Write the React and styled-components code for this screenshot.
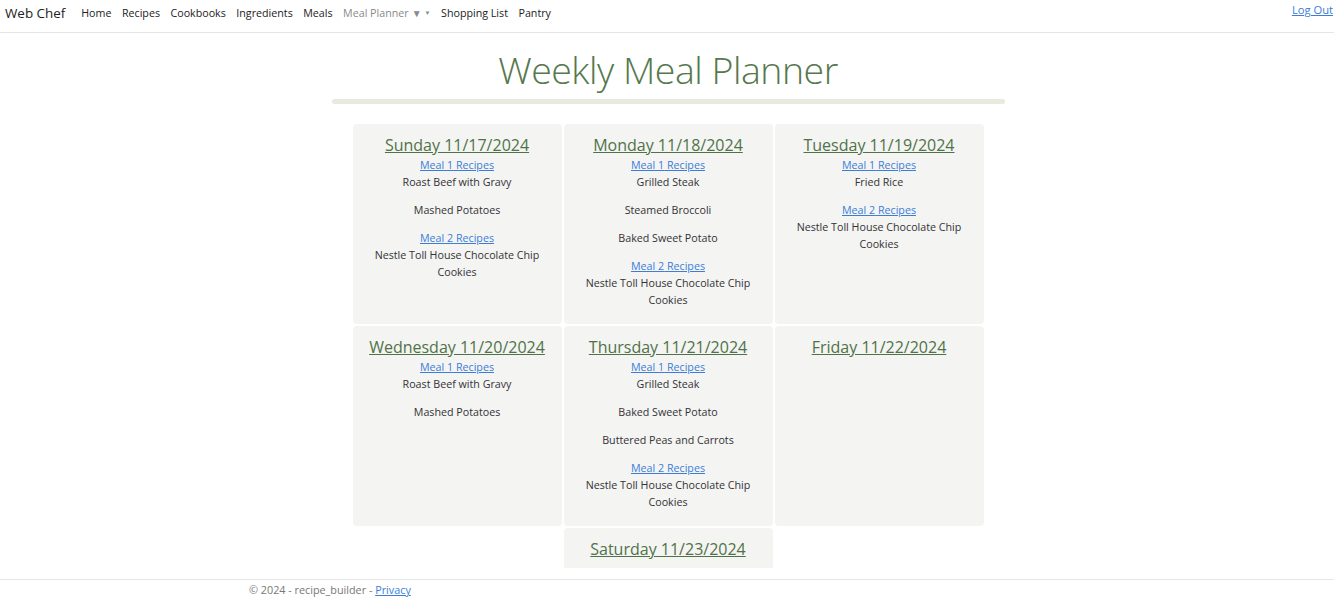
import React from "react"
import styled, { createGlobalStyle } from "styled-components"

const GlobalStyle = createGlobalStyle`
  html, body {
    margin: 0;
    padding: 0;
    background: #fff;
    font-family: "Open Sans", "Noto Sans", sans-serif;
    color: #222;
  }
  * { box-sizing: border-box; }
`

const Page = styled.div`
  display: flex;
  flex-direction: column;
  height: 100vh;
`

const Navbar = styled.nav`
  display: flex;
  align-items: flex-start;
  flex-shrink: 0;
  height: 33px;
  border-bottom: 1px solid #e6e6e6;
  padding: 0 1px 0 5px;
`

const Brand = styled.a`
  font-size: 13.4px;
  color: #222;
  line-height: 26px;
  margin-right: 16px;
  text-decoration: none;
`

const NavList = styled.div`
  display: flex;
  gap: 10.5px;
`

const NavLink = styled.a`
  font-size: 10.7px;
  line-height: 26px;
  color: ${(p) => (p.muted ? "#8a8a8a" : "#222")};
  text-decoration: none;
  display: flex;
  align-items: center;
  gap: 3px;
`

const Caret = styled.span`
  font-size: ${(p) => p.size}px;
  color: #8a8a8a;
`

const LogOut = styled.a`
  margin-left: auto;
  font-size: 11.2px;
  line-height: 20px;
  color: #3b7dd8;
  text-decoration: underline;
`

const Main = styled.main`
  flex: 1;
  overflow: hidden;
  display: flex;
  flex-direction: column;
  align-items: center;
  padding-left: 2px;
  & > * { flex-shrink: 0; }
`

const Title = styled.h1`
  margin: 12px 0 0;
  font-weight: 300;
  font-size: 37.5px;
  line-height: 50px;
  color: #55784d;
  letter-spacing: -0.5px;
`

const Rule = styled.div`
  width: 673px;
  height: 5px;
  background: #e8e9df;
  border-radius: 3px;
  margin: 4px 0 20px;
`

const Grid = styled.div`
  display: flex;
  flex-wrap: wrap;
  justify-content: center;
  gap: 2px;
  width: 631px;
`

const DayCard = styled.div`
  width: 209px;
  height: 200px;
  background: #f4f4f3;
  border-radius: 4px;
  padding-top: 11px;
  text-align: center;
`

const DayTitle = styled.a`
  display: block;
  font-size: 16px;
  line-height: 20px;
  margin-bottom: 2px;
  color: #4f7347;
  text-decoration: underline;
`

const MealLink = styled.a`
  display: block;
  font-size: 10.7px;
  line-height: 17px;
  color: #3b7dd8;
  text-decoration: underline;
`

const Item = styled.p`
  margin: 0 0 11px;
  font-size: 10.7px;
  line-height: 17px;
  color: #333;
  padding: 0 16px;
`

const Footer = styled.footer`
  flex-shrink: 0;
  border-top: 1px solid #e6e6e6;
  margin-top: 11px;
  height: 25px;
  padding-left: 249px;
  font-size: 10.8px;
  line-height: 20px;
  color: #777;
`

const FooterLink = styled.a`
  color: #3b7dd8;
  text-decoration: underline;
`

const days = [
  {
    title: "Sunday 11/17/2024",
    meals: [
      ["Roast Beef with Gravy", "Mashed Potatoes"],
      ["Nestle Toll House Chocolate Chip Cookies"],
    ],
  },
  {
    title: "Monday 11/18/2024",
    meals: [
      ["Grilled Steak", "Steamed Broccoli", "Baked Sweet Potato"],
      ["Nestle Toll House Chocolate Chip Cookies"],
    ],
  },
  {
    title: "Tuesday 11/19/2024",
    meals: [["Fried Rice"], ["Nestle Toll House Chocolate Chip Cookies"]],
  },
  {
    title: "Wednesday 11/20/2024",
    meals: [["Roast Beef with Gravy", "Mashed Potatoes"]],
  },
  {
    title: "Thursday 11/21/2024",
    meals: [
      ["Grilled Steak", "Baked Sweet Potato", "Buttered Peas and Carrots"],
      ["Nestle Toll House Chocolate Chip Cookies"],
    ],
  },
  { title: "Friday 11/22/2024", meals: [] },
  { title: "Saturday 11/23/2024", meals: [] },
]

const navItems = ["Home", "Recipes", "Cookbooks", "Ingredients", "Meals"]

export default function App() {
  return (
    <Page>
      <GlobalStyle />
      <Navbar>
        <Brand href="#">Web Chef</Brand>
        <NavList>
          {navItems.map((item) => (
            <NavLink key={item} href="#">
              {item}
            </NavLink>
          ))}
          <NavLink muted href="#">
            Meal Planner
            <Caret size={10}>▼</Caret>
            <Caret size={6}>▼</Caret>
          </NavLink>
          <NavLink href="#">Shopping List</NavLink>
          <NavLink href="#">Pantry</NavLink>
        </NavList>
        <LogOut href="#">Log Out</LogOut>
      </Navbar>
      <Main>
        <Title>Weekly Meal Planner</Title>
        <Rule />
        <Grid>
          {days.map((day) => (
            <DayCard key={day.title}>
              <DayTitle href="#">{day.title}</DayTitle>
              {day.meals.map((items, i) => (
                <React.Fragment key={i}>
                  <MealLink href="#">Meal {i + 1} Recipes</MealLink>
                  {items.map((item) => (
                    <Item key={item}>{item}</Item>
                  ))}
                </React.Fragment>
              ))}
            </DayCard>
          ))}
        </Grid>
      </Main>
      <Footer>
        © 2024 - recipe_builder - <FooterLink href="#">Privacy</FooterLink>
      </Footer>
    </Page>
  )
}
